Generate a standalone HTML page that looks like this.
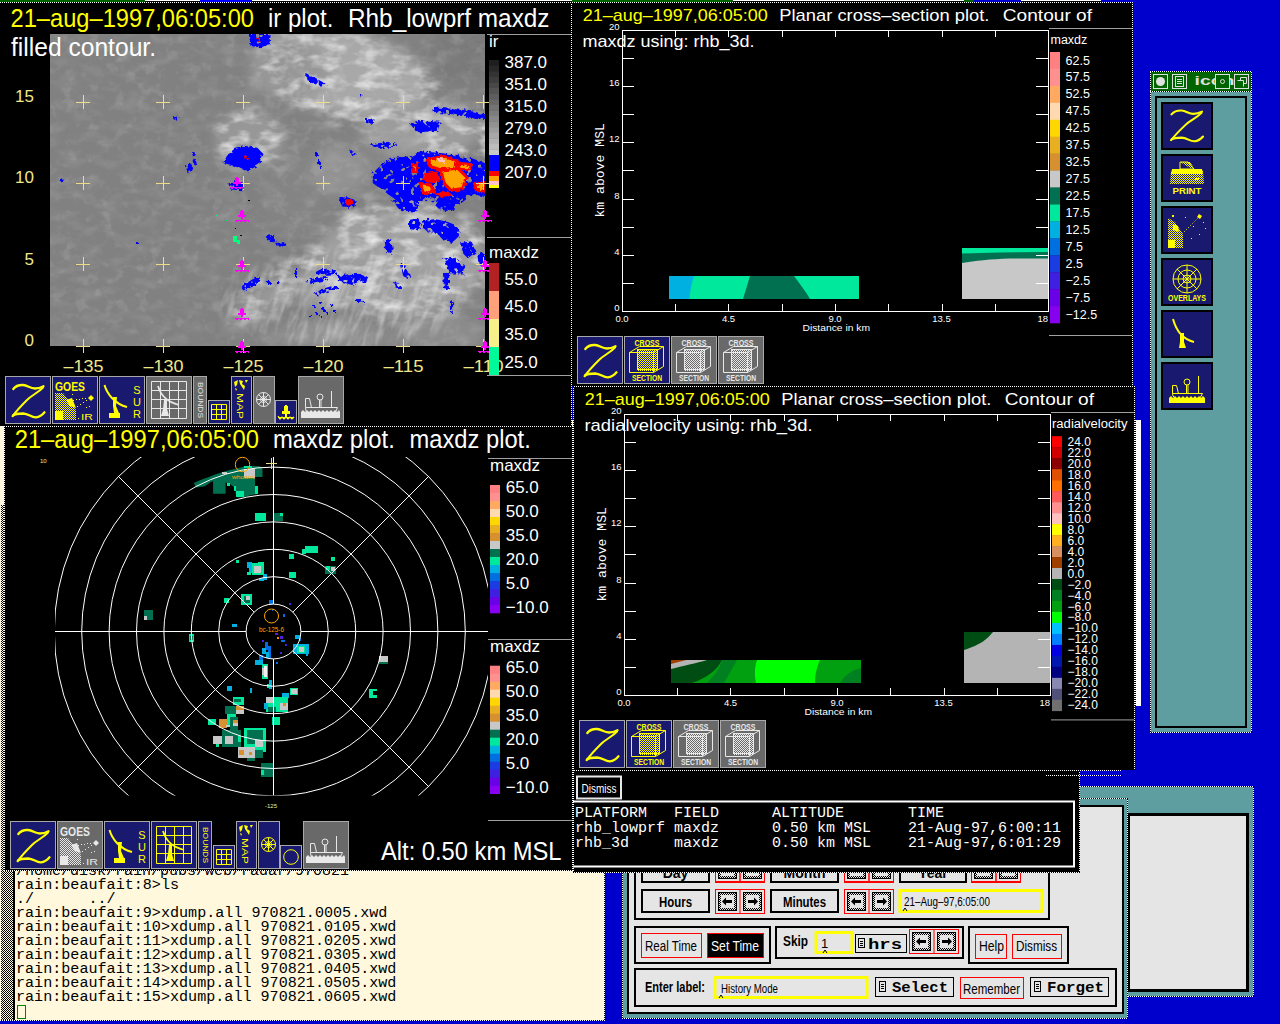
<!DOCTYPE html>
<html><head><meta charset="utf-8">
<style>
html,body{margin:0;padding:0;width:1280px;height:1024px;overflow:hidden;background:#0000cd;}
svg{position:absolute;left:0;top:0;}
text{font-family:"Liberation Sans",sans-serif;}
.m,.m text{font-family:"Liberation Mono",monospace;}
.sf,.sf text{font-family:"Liberation Serif",serif;}
</style></head><body>
<svg width="1280" height="1024" viewBox="0 0 1280 1024">
<defs>
<pattern id="chkY" width="2" height="2" patternUnits="userSpaceOnUse"><rect width="2" height="2" fill="#191970"/><rect width="1" height="1" fill="#ffff00"/><rect x="1" y="1" width="1" height="1" fill="#ffff00"/></pattern>
<pattern id="chkW" width="2" height="2" patternUnits="userSpaceOnUse"><rect width="2" height="2" fill="#696969"/><rect width="1" height="1" fill="#e8e8e8"/><rect x="1" y="1" width="1" height="1" fill="#e8e8e8"/></pattern>
<pattern id="chkT" width="2" height="2" patternUnits="userSpaceOnUse"><rect width="2" height="2" fill="#fff8dc"/><rect width="1" height="1" fill="#000"/><rect x="1" y="1" width="1" height="1" fill="#000"/></pattern>
<pattern id="dotH" width="2" height="2" patternUnits="userSpaceOnUse"><rect width="2" height="2" fill="#000"/><rect width="1" height="2" fill="#fff"/></pattern>
<pattern id="dotV" width="2" height="2" patternUnits="userSpaceOnUse"><rect width="2" height="2" fill="#000"/><rect width="2" height="1" fill="#fff"/></pattern>
<pattern id="chkG" width="2" height="2" patternUnits="userSpaceOnUse"><rect width="2" height="2" fill="#e5e5e5"/><rect width="1" height="1" fill="#000"/><rect x="1" y="1" width="1" height="1" fill="#000"/></pattern>

<!-- Z icon 46x48 -->
<symbol id="iZ" viewBox="0 0 46 48" width="46" height="48" overflow="visible">
<rect x="0.5" y="0.5" width="45" height="47" fill="#191970" stroke="#a8a8a8"/>
<g fill="none" stroke="#ffff00" stroke-linecap="round" stroke-linejoin="round">
<path d="M8.3,13 C11,9.5 14,8.8 18,9 C23,9.5 25,12.5 30,12.5 C34,12.5 36,11.5 38.5,10.2" stroke-width="2.3"/>
<path d="M38,11.5 C33,17 27,19 22,24 C16,30 12,34 7.5,40.3" stroke-width="2"/>
<path d="M8,39.5 C10,37.8 13,37.5 18,37.5 C24,37.8 26,41.5 31,41.3 C35,41 37.5,38.8 39.5,36.3" stroke-width="2.3"/>
</g>
</symbol>

<!-- cross section icon navy -->
<symbol id="iCSy" viewBox="0 0 46 48" width="46" height="48" overflow="visible">
<rect x="0.5" y="0.5" width="45" height="47" fill="#191970" stroke="#a8a8a8"/>
<text x="23" y="9.5" font-size="8.5" font-weight="bold" fill="#ffff00" text-anchor="middle" textLength="25" lengthAdjust="spacingAndGlyphs">CROSS</text>
<text x="23" y="45" font-size="8.5" font-weight="bold" fill="#ffff00" text-anchor="middle" textLength="30" lengthAdjust="spacingAndGlyphs">SECTION</text>
<rect x="13" y="13" width="20" height="22" fill="url(#chkY)"/>
<g fill="none" stroke="#ffff00" stroke-width="1">
<path d="M5.5,16.5 H29.5 V36.5 H5.5 Z M5.5,16.5 L15.5,10.5 H39.5 L29.5,16.5 M39.5,10.5 V30.5 L29.5,36.5"/>
<path d="M13.5,13.5 H33.5 V33.5 H13.5 Z"/>
</g>
</symbol>
<symbol id="iCSw" viewBox="0 0 46 48" width="46" height="48" overflow="visible">
<rect x="0.5" y="0.5" width="45" height="47" fill="#696969" stroke="#a8a8a8"/>
<text x="23" y="9.5" font-size="8.5" font-weight="bold" fill="#e8e8e8" text-anchor="middle" textLength="25" lengthAdjust="spacingAndGlyphs">CROSS</text>
<text x="23" y="45" font-size="8.5" font-weight="bold" fill="#e8e8e8" text-anchor="middle" textLength="30" lengthAdjust="spacingAndGlyphs">SECTION</text>
<rect x="13" y="13" width="20" height="22" fill="url(#chkW)"/>
<g fill="none" stroke="#e8e8e8" stroke-width="1">
<path d="M5.5,16.5 H29.5 V36.5 H5.5 Z M5.5,16.5 L15.5,10.5 H39.5 L29.5,16.5 M39.5,10.5 V30.5 L29.5,36.5"/>
<path d="M13.5,13.5 H33.5 V33.5 H13.5 Z"/>
</g>
</symbol>

<!-- GOES IR 46x48 -->
<symbol id="iGOES" viewBox="0 0 46 48" width="46" height="48" overflow="visible">
<rect x="0.5" y="0.5" width="45" height="47" fill="#191970" stroke="#a8a8a8"/>
<text x="3" y="14.5" font-size="12" font-weight="bold" fill="#ffff00" textLength="30" lengthAdjust="spacingAndGlyphs">GOES</text>
<path d="M3,17 L11,17 L24,34 L24,44 L3,44 Z" fill="url(#chkY)"/>
<path d="M3,35 L11,35 L11,44 L3,44 Z M14,24 L20,22 L24,32 L18,30 Z" fill="#ffff00"/>
<g fill="#ffff00"><path d="M39,19 L42,22 L39,25 L36,22 Z"/>
<rect x="21" y="24" width="1" height="1"/><rect x="24" y="23" width="1" height="1"/><rect x="27" y="23" width="1" height="1"/><rect x="30" y="22" width="1" height="1"/><rect x="33" y="22" width="1" height="1"/>
<rect x="25" y="30" width="1" height="1"/><rect x="28" y="28" width="1" height="1"/><rect x="31" y="26" width="1" height="1"/><rect x="34" y="24" width="1" height="1"/>
<rect x="20" y="18" width="1" height="1"/><rect x="34" y="31" width="1" height="1"/><rect x="37" y="30" width="1" height="1"/><rect x="26" y="42" width="1" height="1"/>
</g>
<text x="29" y="44" font-size="9" fill="#ffff00" textLength="12" lengthAdjust="spacingAndGlyphs">IR</text>
</symbol>

<!-- SUR radar 46x48 -->
<symbol id="iSUR" viewBox="0 0 46 48" width="46" height="48" overflow="visible">
<rect x="0.5" y="0.5" width="45" height="47" fill="#191970" stroke="#a8a8a8"/>
<path d="M5.5,9 C8,18 16,28 28,31" fill="none" stroke="#ffff00" stroke-width="2"/>
<path d="M14,21 L18,21 L17,30 L20,37 L15,37 L14,30 Z M10,37 L21,37 L21,42 L10,42 Z" fill="#ffff00"/>
<text x="38" y="17.5" font-size="11" fill="#ffff00" text-anchor="middle">S</text>
<text x="38" y="29.5" font-size="11" fill="#ffff00" text-anchor="middle">U</text>
<text x="38" y="41.5" font-size="11" fill="#ffff00" text-anchor="middle">R</text>
</symbol>

<!-- grid radar gray 46x48 -->
<symbol id="iGRIDw" viewBox="0 0 46 48" width="46" height="48" overflow="visible">
<rect x="0.5" y="0.5" width="45" height="47" fill="#696969" stroke="#a8a8a8"/>
<g fill="none" stroke="#e8e8e8" stroke-width="1">
<path d="M5.5,5.5 H40.5 V42.5 H5.5 Z M14.5,5.5 V42.5 M23.5,5.5 V42.5 M32.5,5.5 V42.5 M5.5,14.5 H40.5 M5.5,23.5 H40.5 M5.5,32.5 H40.5"/>
<path d="M12,10 C14,17 18,25 33,29" stroke-width="1.8"/>
</g>
<path d="M18,24 L21,24 L21,33 L23,40 L15,40 L17,33 Z" fill="#e8e8e8"/>
</symbol>
<symbol id="iGRIDy" viewBox="0 0 46 48" width="46" height="48" overflow="visible">
<rect x="0.5" y="0.5" width="45" height="47" fill="#191970" stroke="#a8a8a8"/>
<g fill="none" stroke="#ffff00" stroke-width="1">
<path d="M5.5,5.5 H40.5 V42.5 H5.5 Z M14.5,5.5 V42.5 M23.5,5.5 V42.5 M32.5,5.5 V42.5 M5.5,14.5 H40.5 M5.5,23.5 H40.5 M5.5,32.5 H40.5"/>
<path d="M12,10 C14,17 18,25 33,29" stroke-width="1.8"/>
</g>
<path d="M18,24 L21,24 L21,33 L23,40 L15,40 L17,33 Z" fill="#ffff00"/>
</symbol>
<!-- bounds 14x48 -->
<symbol id="iBOUNDS" viewBox="0 0 14 48" width="14" height="48" overflow="visible">
<rect x="0.5" y="0.5" width="13" height="47" fill="#696969" stroke="#a8a8a8"/>
<text transform="translate(4.5,6) rotate(90)" font-size="7" fill="#e8e8e8" textLength="36" lengthAdjust="spacingAndGlyphs">BOUNDS</text>
</symbol>
<symbol id="iBOUNDSy" viewBox="0 0 14 48" width="14" height="48" overflow="visible">
<rect x="0.5" y="0.5" width="13" height="47" fill="#191970" stroke="#a8a8a8"/>
<text transform="translate(4.5,6) rotate(90)" font-size="7" fill="#ffff00" textLength="36" lengthAdjust="spacingAndGlyphs">BOUNDS</text>
</symbol>
<!-- small grid 22x24 -->
<symbol id="iSGRID" viewBox="0 0 22 24" width="22" height="24" overflow="visible">
<rect x="0.5" y="0.5" width="21" height="23" fill="#191970" stroke="#a8a8a8"/>
<path d="M3.5,4.5 H18.5 V19.5 H3.5 Z M8.5,4.5 V19.5 M13.5,4.5 V19.5 M3.5,9.5 H18.5 M3.5,14.5 H18.5" fill="none" stroke="#ffff00"/>
</symbol>
<!-- map 21x48 -->
<symbol id="iMAP" viewBox="0 0 21 48" width="21" height="48" overflow="visible">
<rect x="0.5" y="0.5" width="20" height="47" fill="#191970" stroke="#a8a8a8"/>
<path d="M3,6 L7,4 L6,9 L4,11 Z M8,4 L12,5 L11,8 L14,10 L13,14 L11,11 L9,8 Z M14,4 L17,4 L15,7 Z M4,12 L6,13 L5,15 Z" fill="#ffff00"/>
<text transform="translate(6,17) rotate(90)" font-size="9" fill="#ffff00" textLength="26" lengthAdjust="spacingAndGlyphs">MAP</text>
</symbol>
<!-- globe gray 22x48 -->
<symbol id="iGLOBE" viewBox="0 0 22 48" width="22" height="48" overflow="visible">
<rect x="0.5" y="0.5" width="21" height="47" fill="#696969" stroke="#a8a8a8"/>
<g fill="none" stroke="#e8e8e8" stroke-width="1">
<circle cx="10.5" cy="23.5" r="7"/><circle cx="10.5" cy="23.5" r="3"/>
<path d="M10.5,16.5 V30.5 M3.5,23.5 H17.5 M5.5,18.5 L15.5,28.5 M15.5,18.5 L5.5,28.5"/>
</g>
</symbol>
<!-- buoy 22x24 -->
<symbol id="iBUOY" viewBox="0 0 22 24" width="22" height="24" overflow="visible">
<rect x="0.5" y="0.5" width="21" height="23" fill="#191970" stroke="#a8a8a8"/>
<path d="M10,5 H12 V6 H13 V11 H15 V14 H12 V17 H10 V14 H7 V11 H9 V6 H10 Z" fill="#ffff00"/>
<path d="M3,16 L5,19 L7,17 L9,19 L11,17 L13,19 L15,17 L17,19 L19,17" fill="none" stroke="#ffff00" stroke-width="1.2"/>
<rect x="3" y="17" width="16" height="1" fill="#ffff00"/>
</symbol>
<!-- ship gray 46x48 -->
<symbol id="iSHIP" viewBox="0 0 46 48" width="46" height="48" overflow="visible">
<rect x="0.5" y="0.5" width="45" height="47" fill="#696969" stroke="#a8a8a8"/>
<g fill="none" stroke="#e8e8e8" stroke-width="1">
<path d="M7.5,31.5 H39.5 L37,37 M7.5,31.5 L8,35 L10,37"/>
<path d="M7.5,31.5 V22.5 H11.5 L13.5,31.5"/>
<circle cx="22" cy="21" r="3"/>
<path d="M21.5,24 V31.5 M23,24 V31.5 M33.5,15 V31.5"/>
</g>
<path d="M3,36 L5,34 L7,36 L9,34 L11,36 L13,34 L15,36 L17,34 L19,36 L21,34 L23,36 L25,34 L27,36 L29,34 L31,36 L33,34 L35,36 L37,34 L39,36 L41,34 L42,36 L42,42 L3,42 Z" fill="#e8e8e8"/>
</symbol>
<symbol id="iSHIPy" viewBox="0 0 46 48" width="46" height="48" overflow="visible">
<rect x="0.5" y="0.5" width="45" height="47" fill="#191970" stroke="#a8a8a8"/>
<g fill="none" stroke="#ffff00" stroke-width="1">
<path d="M7.5,31.5 H39.5 L37,37 M7.5,31.5 L8,35 L10,37"/>
<path d="M7.5,31.5 V22.5 H11.5 L13.5,31.5"/>
<circle cx="22" cy="21" r="3"/>
<path d="M21.5,24 V31.5 M23,24 V31.5 M33.5,15 V31.5"/>
</g>
<path d="M3,36 L5,34 L7,36 L9,34 L11,36 L13,34 L15,36 L17,34 L19,36 L21,34 L23,36 L25,34 L27,36 L29,34 L31,36 L33,34 L35,36 L37,34 L39,36 L41,34 L42,36 L42,42 L3,42 Z" fill="#ffff00"/>
</symbol>
<!-- magenta buoy marker 16x14 centered -->
<symbol id="mBUOY" viewBox="-8 -10 16 14" width="16" height="14" overflow="visible">
<path d="M-1,-9 H1 V-8 H2 V-4 H4 V-2 H1 V0 H-1 V-2 H-4 V-4 H-2 V-8 H-1 Z" fill="#ff00ff"/>
<path d="M-7,1 L-5,3 L-3,1 L-1,3 L1,1 L3,3 L5,1 L7,3" fill="none" stroke="#ff00ff" stroke-width="1"/>
<rect x="-7" y="1" width="14" height="1" fill="#ff00ff"/>
</symbol>

<symbol id="iGOESw" viewBox="0 0 46 48" width="46" height="48" overflow="visible">
<rect x="0.5" y="0.5" width="45" height="47" fill="#696969" stroke="#a8a8a8"/>
<text x="3" y="14.5" font-size="12" font-weight="bold" fill="#e8e8e8" textLength="30" lengthAdjust="spacingAndGlyphs">GOES</text>
<path d="M3,17 L11,17 L24,34 L24,44 L3,44 Z" fill="url(#chkW)"/>
<path d="M3,35 L11,35 L11,44 L3,44 Z M14,24 L20,22 L24,32 L18,30 Z" fill="#e8e8e8"/>
<g fill="#e8e8e8"><path d="M39,19 L42,22 L39,25 L36,22 Z"/>
<rect x="21" y="24" width="1" height="1"/><rect x="24" y="23" width="1" height="1"/><rect x="27" y="23" width="1" height="1"/><rect x="30" y="22" width="1" height="1"/><rect x="33" y="22" width="1" height="1"/>
<rect x="25" y="30" width="1" height="1"/><rect x="28" y="28" width="1" height="1"/><rect x="31" y="26" width="1" height="1"/><rect x="34" y="24" width="1" height="1"/>
<rect x="20" y="18" width="1" height="1"/><rect x="34" y="31" width="1" height="1"/><rect x="37" y="30" width="1" height="1"/><rect x="26" y="42" width="1" height="1"/>
</g>
<text x="29" y="44" font-size="9" fill="#e8e8e8" textLength="12" lengthAdjust="spacingAndGlyphs">IR</text>
</symbol>
<symbol id="iGLOBEy" viewBox="0 0 22 48" width="22" height="48" overflow="visible">
<rect x="0.5" y="0.5" width="21" height="47" fill="#191970" stroke="#a8a8a8"/>
<g fill="none" stroke="#ffff00" stroke-width="1">
<circle cx="10.5" cy="23.5" r="7"/><circle cx="10.5" cy="23.5" r="3"/>
<path d="M10.5,16.5 V30.5 M3.5,23.5 H17.5 M5.5,18.5 L15.5,28.5 M15.5,18.5 L5.5,28.5"/>
</g>
</symbol>
<symbol id="iCIRC" viewBox="0 0 22 24" width="22" height="24" overflow="visible">
<rect x="0.5" y="0.5" width="21" height="23" fill="#191970" stroke="#a8a8a8"/>
<circle cx="11" cy="12" r="7.3" fill="none" stroke="#ffff00"/>
</symbol>
</defs>

<g id="topstrip">
<rect x="0" y="0" width="145" height="2" fill="#006400"/>
<rect x="145" y="0" width="55" height="2" fill="url(#dotV)"/>
<rect x="200" y="0" width="52" height="2" fill="#0000ff"/>
<rect x="252" y="0" width="320" height="2" fill="url(#dotV)"/>
<rect x="572" y="0" width="161" height="2" fill="#006400"/>
<rect x="733" y="0" width="231" height="2" fill="url(#dotV)"/>
<rect x="964" y="0" width="10" height="2" fill="#006400"/>
<rect x="1021" y="0" width="80" height="2" fill="url(#dotV)"/>
</g>

<g id="term">
<rect x="0" y="420" width="605" height="601" fill="#fff8dc"/>
<rect x="1" y="505" width="12" height="516" fill="url(#chkT)"/>
<rect x="13" y="866" width="2" height="155" fill="#000"/>
<rect x="604" y="866" width="1" height="155" fill="url(#dotV)"/>
<rect x="0" y="1020" width="605" height="1" fill="url(#dotH)"/>
<rect x="4" y="420" width="1" height="450" fill="url(#dotV)"/>
<g class="m" font-size="15.1" fill="#000">
<text x="16" y="874.7" textLength="333" lengthAdjust="spacingAndGlyphs">/home/disk/rain/pubs/web/radar/970821</text>
<text x="16" y="888.7" xml:space="preserve">rain:beaufait:8&gt;ls</text>
<text x="16" y="902.7" xml:space="preserve">./      ../</text>
<text x="16" y="916.7" xml:space="preserve">rain:beaufait:9&gt;xdump.all 970821.0005.xwd</text>
<text x="16" y="930.7" xml:space="preserve">rain:beaufait:10&gt;xdump.all 970821.0105.xwd</text>
<text x="16" y="944.7" xml:space="preserve">rain:beaufait:11&gt;xdump.all 970821.0205.xwd</text>
<text x="16" y="958.7" xml:space="preserve">rain:beaufait:12&gt;xdump.all 970821.0305.xwd</text>
<text x="16" y="972.7" xml:space="preserve">rain:beaufait:13&gt;xdump.all 970821.0405.xwd</text>
<text x="16" y="986.7" xml:space="preserve">rain:beaufait:14&gt;xdump.all 970821.0505.xwd</text>
<text x="16" y="1000.7" xml:space="preserve">rain:beaufait:15&gt;xdump.all 970821.0605.xwd</text>
</g>
<rect x="17.5" y="1005.5" width="8" height="13" fill="none" stroke="#008000" stroke-width="1"/>
</g>

<g id="backwin">
<rect x="1080" y="786" width="174" height="211" fill="#5f9ea0"/>
<rect x="1253" y="786" width="1" height="211" fill="url(#dotV)"/>
<rect x="1080" y="786" width="174" height="1" fill="url(#dotH)"/>
<rect x="1080" y="996" width="174" height="1" fill="url(#dotH)"/>
<rect x="1128" y="813" width="121" height="179" fill="#000"/>
<rect x="1130" y="816" width="116" height="173" fill="#e5e5e5"/>
</g>

<g id="timectl" font-family="Liberation Sans, sans-serif">
<rect x="622" y="798" width="506" height="221" fill="#5f9ea0"/>
<rect x="622" y="798" width="1" height="221" fill="url(#dotV)"/>
<rect x="1127" y="798" width="1" height="221" fill="url(#dotV)"/>
<rect x="622" y="1018" width="506" height="1" fill="url(#dotH)"/>
<rect x="622" y="798" width="506" height="1" fill="url(#dotH)"/>
<rect x="627" y="805" width="497" height="209" fill="#000"/>
<rect x="629" y="807" width="493" height="205" fill="#e5e5e5"/>
<!-- group 1 frame -->
<rect x="635" y="813" width="414" height="106" fill="none" stroke="#000" stroke-width="2"/>
<!-- day row (mostly hidden) -->
<rect x="642" y="858" width="67" height="24" fill="#e5e5e5" stroke="#000" stroke-width="2"/>
<text x="675.5" y="878" font-size="14" font-weight="bold" text-anchor="middle">Day</text>
<rect x="715.5" y="857.5" width="49" height="25" fill="none" stroke="#ff0000"/>
<rect x="739.5" y="857.5" width="1" height="25" fill="#ff0000"/>
<rect x="771" y="858" width="67" height="24" fill="#e5e5e5" stroke="#000" stroke-width="2"/>
<text x="804.5" y="878" font-size="14" font-weight="bold" text-anchor="middle">Month</text>
<rect x="844.5" y="857.5" width="49" height="25" fill="none" stroke="#ff0000"/>
<rect x="868.5" y="857.5" width="1" height="25" fill="#ff0000"/>
<rect x="900" y="858" width="66" height="24" fill="#e5e5e5" stroke="#000" stroke-width="2"/>
<text x="933" y="878" font-size="14" font-weight="bold" text-anchor="middle">Year</text>
<rect x="971.5" y="857.5" width="49" height="25" fill="none" stroke="#ff0000"/>
<rect x="995.5" y="857.5" width="1" height="25" fill="#ff0000"/>
<!-- hours row -->
<rect x="642" y="890" width="67" height="22" fill="#e5e5e5" stroke="#000" stroke-width="2"/>
<text x="675.5" y="907" font-size="14" font-weight="bold" text-anchor="middle" textLength="33" lengthAdjust="spacingAndGlyphs">Hours</text>
<rect x="771" y="890" width="67" height="22" fill="#e5e5e5" stroke="#000" stroke-width="2"/>
<text x="804.5" y="907" font-size="14" font-weight="bold" text-anchor="middle" textLength="43" lengthAdjust="spacingAndGlyphs">Minutes</text>
<g id="arrows1">
<rect x="715.5" y="889.5" width="49" height="24" fill="none" stroke="#ff0000"/>
<rect x="739.5" y="889.5" width="1" height="24" fill="#ff0000"/>
<rect x="718" y="892" width="19" height="19" fill="url(#chkG)"/>
<rect x="721" y="895" width="13" height="13" fill="#e5e5e5"/>
<rect x="718.5" y="892.5" width="18" height="18" fill="none" stroke="#000"/>
<path d="M722,901.5 L726,897.5 V900 H732 V903 H726 V905.5 Z" fill="#000"/>
<rect x="743" y="892" width="19" height="19" fill="url(#chkG)"/>
<rect x="746" y="895" width="13" height="13" fill="#e5e5e5"/>
<rect x="743.5" y="892.5" width="18" height="18" fill="none" stroke="#000"/>
<path d="M758,901.5 L754,897.5 V900 H748 V903 H754 V905.5 Z" fill="#000"/>
</g>
<use href="#arrows1" x="129" y="0"/>
<use href="#arrows1" x="0" y="-32"/><use href="#arrows1" x="129" y="-32"/><use href="#arrows1" x="256" y="-32"/>
<rect x="900" y="890.5" width="142" height="21" fill="none" stroke="#ffff00" stroke-width="3"/>
<text x="904" y="906" font-size="12" textLength="86" lengthAdjust="spacingAndGlyphs">21–Aug–97,6:05:00</text>
<path d="M903,911 L905,908 L907,911" fill="none" stroke="#000"/>
<!-- group real time -->
<rect x="635" y="927" width="135" height="36" fill="none" stroke="#000" stroke-width="2"/>
<rect x="641.5" y="933.5" width="60" height="24" fill="none" stroke="#ff0000"/>
<text x="645" y="951" font-size="14" textLength="52" lengthAdjust="spacingAndGlyphs">Real Time</text>
<rect x="707" y="933" width="57" height="25" fill="#000"/>
<rect x="707.5" y="933.5" width="56" height="24" fill="none" stroke="#ff0000"/>
<text x="711" y="951" font-size="14" fill="#fff" textLength="48" lengthAdjust="spacingAndGlyphs">Set Time</text>
<!-- group skip -->
<rect x="776" y="927" width="187" height="31" fill="none" stroke="#000" stroke-width="2"/>
<text x="783" y="946" font-size="14" font-weight="bold" textLength="25" lengthAdjust="spacingAndGlyphs">Skip</text>
<rect x="816" y="932.5" width="36" height="20" fill="none" stroke="#ffff00" stroke-width="3"/>
<text x="821" y="948" font-size="13">1</text>
<path d="M823,953 L825,950 L827,953" fill="none" stroke="#000"/>
<rect x="855.5" y="934.5" width="51" height="18" fill="none" stroke="#000"/>
<rect x="858.5" y="938.5" width="6" height="9" fill="#e5e5e5" stroke="#000"/>
<path d="M860,941.5 H863 M860,943.5 H863 M860,945.5 H863" stroke="#000"/>
<text x="868" y="948.5" font-size="14" font-weight="bold" class="m" textLength="34" lengthAdjust="spacingAndGlyphs">hrs</text>
<use href="#arrows1" x="194" y="40"/>
<!-- help/dismiss -->
<rect x="969" y="927" width="99" height="36" fill="none" stroke="#000" stroke-width="2"/>
<rect x="975.5" y="934.5" width="31" height="24" fill="none" stroke="#ff0000"/>
<text x="979" y="951" font-size="14" textLength="25" lengthAdjust="spacingAndGlyphs">Help</text>
<rect x="1012.5" y="934.5" width="49" height="24" fill="none" stroke="#ff0000"/>
<text x="1016" y="951" font-size="14" textLength="41" lengthAdjust="spacingAndGlyphs">Dismiss</text>
<!-- enter label -->
<rect x="635" y="969" width="481" height="37" fill="none" stroke="#000" stroke-width="2"/>
<text x="645" y="992" font-size="14" font-weight="bold" textLength="60" lengthAdjust="spacingAndGlyphs">Enter label:</text>
<rect x="715" y="977.5" width="152" height="20" fill="none" stroke="#ffff00" stroke-width="3"/>
<text x="721" y="993" font-size="12" textLength="57" lengthAdjust="spacingAndGlyphs">History Mode</text>
<path d="M719,998 L721,995 L723,998" fill="none" stroke="#000"/>
<rect x="875.5" y="977.5" width="78" height="19" fill="none" stroke="#000"/>
<rect x="879.5" y="981.5" width="6" height="10" fill="#e5e5e5" stroke="#000"/>
<path d="M881,984.5 H884 M881,986.5 H884 M881,988.5 H884" stroke="#000"/>
<text x="892" y="992" font-size="14" font-weight="bold" class="m" textLength="56" lengthAdjust="spacingAndGlyphs">Select</text>
<rect x="960.5" y="977.5" width="63" height="21" fill="none" stroke="#ff0000"/>
<text x="963" y="994" font-size="14" textLength="57" lengthAdjust="spacingAndGlyphs">Remember</text>
<rect x="1030.5" y="977.5" width="78" height="19" fill="none" stroke="#000"/>
<rect x="1034.5" y="981.5" width="6" height="10" fill="#e5e5e5" stroke="#000"/>
<path d="M1036,984.5 H1039 M1036,986.5 H1039 M1036,988.5 H1039" stroke="#000"/>
<text x="1047" y="992" font-size="14" font-weight="bold" class="m" textLength="57" lengthAdjust="spacingAndGlyphs">Forget</text>
</g>

<g id="iconbar">
<rect x="1150" y="71" width="101" height="662" fill="#5f9ea0"/>
<rect x="1150" y="71" width="1" height="662" fill="url(#dotV)"/>
<rect x="1251" y="71" width="1" height="662" fill="url(#dotV)"/>
<rect x="1150" y="71" width="102" height="1" fill="url(#dotH)"/>
<rect x="1150" y="732" width="102" height="1" fill="url(#dotH)"/>
<rect x="1151" y="72" width="100" height="19" fill="#006400"/>
<rect x="1150" y="91" width="102" height="1" fill="url(#dotH)"/>
<g fill="none" stroke="#e0e0e0" stroke-width="1">
<rect x="1153.5" y="74.5" width="14" height="14"/>
<rect x="1172.5" y="74.5" width="14" height="14"/>
<rect x="1215.5" y="74.5" width="14" height="14"/>
<rect x="1234.5" y="74.5" width="14" height="14"/>
</g>
<circle cx="1160.5" cy="81.5" r="4.5" fill="#e0e0e0"/>
<rect x="1175.5" y="76.5" width="8" height="10" fill="none" stroke="#e0e0e0"/>
<path d="M1177,79.5 H1182 M1177,81.5 H1182 M1177,83.5 H1182" stroke="#e0e0e0"/>
<text x="1194.5" y="85" font-size="13" font-weight="bold" fill="#e0e0e0" textLength="40" lengthAdjust="spacingAndGlyphs">icon</text>
<rect x="1215.5" y="74.5" width="14" height="14" fill="#006400" stroke="#e0e0e0"/>
<circle cx="1222.5" cy="81.5" r="2" fill="none" stroke="#e0e0e0"/>
<path d="M1237.5,80.5 H1243.5 V86.5 M1240.5,80.5 V77.5 H1246.5 V83.5 H1243.5" fill="none" stroke="#e0e0e0"/>
<rect x="1155" y="96" width="92" height="632" fill="#000"/>
<rect x="1157" y="98" width="88" height="628" fill="#5f9ea0"/>
<g>
<rect x="1161" y="102" width="52" height="48" fill="#000"/>
<rect x="1161" y="154" width="52" height="48" fill="#000"/>
<rect x="1161" y="206" width="52" height="48" fill="#000"/>
<rect x="1161" y="258" width="52" height="48" fill="#000"/>
<rect x="1161" y="310" width="52" height="48" fill="#000"/>
<rect x="1161" y="362" width="52" height="48" fill="#000"/>
</g>
<g fill="#191970">
<rect x="1163" y="104" width="48" height="44"/>
<rect x="1163" y="156" width="48" height="44"/>
<rect x="1163" y="208" width="48" height="44"/>
<rect x="1163" y="260" width="48" height="44"/>
<rect x="1163" y="312" width="48" height="44"/>
<rect x="1163" y="364" width="48" height="44"/>
</g>
<!-- Z -->
<g fill="none" stroke="#ffff00" stroke-linecap="round" transform="translate(1160.5,102) scale(1.0,0.95)">
<path d="M11,13 C14,9.5 17,8.8 21,9 C26,9.5 28,12.5 33,12.5 C37,12.5 39,11.5 41.5,10.2" stroke-width="2.2"/>
<path d="M41,11.5 C36,17 30,19 25,24 C19,30 15,34 10.5,40.3" stroke-width="2"/>
<path d="M11,39.5 C13,37.8 16,37.5 21,37.5 C27,37.8 29,41.5 34,41.3 C38,41 40.5,38.8 42.5,36.3" stroke-width="2.2"/>
</g>
<!-- PRINT -->
<g transform="translate(1163,156)">
<path d="M17,6 H27 L31,12 L27,12 Z" fill="url(#chkY)"/>
<path d="M17,6 H25 L31,13 H17 Z" fill="none" stroke="#ffff00"/>
<path d="M8,15 H40 L41,28 H7 Z" fill="url(#chkY)"/>
<path d="M9,13 H39 L40,18 H8 Z" fill="#ffff00"/>
<rect x="32" y="22" width="4" height="2" fill="#ffff00"/>
<text x="24" y="38" font-size="9" font-weight="bold" fill="#ffff00" text-anchor="middle" textLength="29" lengthAdjust="spacingAndGlyphs">PRINT</text>
</g>
<!-- satellite -->
<g transform="translate(1163,208)">
<path d="M5,10 L12,14 L20,26 L20,40 L5,40 Z" fill="url(#chkY)"/>
<path d="M5,32 L12,32 L12,40 L5,40 Z M10,16 L15,18 L16,24 L10,22 Z" fill="#ffff00"/>
<path d="M21,24 L37,8" stroke="#ffff00" stroke-dasharray="1,2" fill="none"/>
<path d="M36,6 L39,8 L37,11 L34,9 Z" fill="#ffff00"/>
<g fill="#ffff00"><rect x="9" y="7" width="2" height="2"/><rect x="22" y="9" width="1" height="1"/><rect x="30" y="18" width="1" height="1"/><rect x="40" y="14" width="1" height="1"/><rect x="36" y="26" width="1" height="1"/><rect x="28" y="30" width="1" height="1"/><rect x="42" y="20" width="1" height="1"/></g>
</g>
<!-- overlays -->
<g transform="translate(1163,260)" fill="none" stroke="#ffff00">
<circle cx="24" cy="19" r="14"/><circle cx="24" cy="19" r="9"/><circle cx="24" cy="19" r="4"/>
<path d="M24,5 V33 M10,19 H38 M14,9 L34,29 M34,9 L14,29"/>
<text x="24" y="41" font-size="8.5" font-weight="bold" fill="#ffff00" stroke="none" text-anchor="middle" textLength="38" lengthAdjust="spacingAndGlyphs">OVERLAYS</text>
</g>
<!-- radar -->
<g transform="translate(1163,312)">
<path d="M10,7 C13,18 19,27 31,30" fill="none" stroke="#ffff00" stroke-width="2"/>
<path d="M17,21 L21,21 L21,30 L23,36 L16,36 L17,30 Z" fill="#ffff00"/>
</g>
<!-- ship -->
<g transform="translate(1163,364)">
<g fill="none" stroke="#ffff00" stroke-width="1">
<path d="M9.5,29.5 H39.5 L37,34 M9.5,29.5 L10,32 L12,34"/>
<path d="M9.5,29.5 V21.5 H13.5 L15.5,29.5"/>
<circle cx="24" cy="18" r="3"/>
<path d="M23.5,21 V29.5 M25,21 V29.5 M35.5,12 V29.5"/>
</g>
<path d="M6,34 L8,32 L10,34 L12,32 L14,34 L16,32 L18,34 L20,32 L22,34 L24,32 L26,34 L28,32 L30,34 L32,32 L34,34 L36,32 L38,34 L40,32 L42,34 V39 H6 Z" fill="#ffff00"/>
</g>
<!-- white bar behind -->
</g>
<rect x="1135" y="420" width="6" height="286" fill="#fff"/>
<rect x="1135" y="420" width="1" height="286" fill="url(#dotV)"/>

<g id="win1">
<rect x="0" y="2" width="571" height="424" fill="#000"/>
<rect x="571" y="2" width="1" height="424" fill="url(#dotV)"/>
<rect x="0" y="2" width="571" height="1" fill="url(#dotH)"/>
<defs>
<clipPath id="irclip"><rect x="50" y="34" width="435" height="312"/></clipPath>
<filter id="blur6" x="-50%" y="-50%" width="200%" height="200%"><feGaussianBlur stdDeviation="6"/></filter>
<filter id="blur1" x="-50%" y="-50%" width="200%" height="200%"><feGaussianBlur stdDeviation="1.3"/></filter>
<filter id="blur3" x="-50%" y="-50%" width="200%" height="200%"><feGaussianBlur stdDeviation="3"/></filter>
<filter id="rough" x="-20%" y="-20%" width="140%" height="140%"><feTurbulence type="fractalNoise" baseFrequency="0.3" numOctaves="2" seed="3"/><feDisplacementMap in="SourceGraphic" scale="5"/></filter><filter id="roughh" x="-20%" y="-20%" width="140%" height="140%"><feTurbulence type="fractalNoise" baseFrequency="0.3" numOctaves="2" seed="3" result="n"/><feDisplacementMap in="SourceGraphic" in2="n" scale="6" result="d"/><feTurbulence type="fractalNoise" baseFrequency="0.18" numOctaves="2" seed="21" result="h"/><feColorMatrix in="h" type="matrix" values="0 0 0 0 0  0 0 0 0 0  0 0 0 0 0  -14 0 0 0 9.6" result="hm"/><feComposite in="d" in2="hm" operator="in"/></filter>
<filter id="tex" x="0" y="0" width="100%" height="100%"><feTurbulence type="fractalNoise" baseFrequency="0.08" numOctaves="3" seed="7"/><feColorMatrix type="matrix" values="0 0 0 0 1  0 0 0 0 1  0 0 0 0 1  5 0 0 0 -2.75"/></filter>
</defs>
<g clip-path="url(#irclip)">
<rect x="50" y="34" width="435" height="312" fill="#818181"/>
<!-- cloud masses -->
<defs>
<filter id="tex2" x="0" y="0" width="100%" height="100%"><feTurbulence type="fractalNoise" baseFrequency="0.05 0.09" numOctaves="3" seed="11"/><feColorMatrix type="matrix" values="0 0 0 0 0.85  0 0 0 0 0.85  0 0 0 0 0.85  2.2 0 0 0 -0.95"/></filter>
<mask id="cmask" maskUnits="userSpaceOnUse" x="50" y="34" width="435" height="312">
<rect x="50" y="34" width="435" height="312" fill="#222"/>
<g filter="url(#blur6)" fill="#fff">
<ellipse cx="350" cy="80" rx="95" ry="45" transform="rotate(15 350 80)"/>
<ellipse cx="400" cy="260" rx="90" ry="60"/>
<ellipse cx="270" cy="290" rx="50" ry="16" transform="rotate(-38 270 290)"/>
<ellipse cx="250" cy="140" rx="35" ry="30"/>
<ellipse cx="460" cy="140" rx="40" ry="30"/>
</g>
</mask>
</defs>
<g filter="url(#blur6)">
<ellipse cx="340" cy="72" rx="90" ry="42" fill="#a8a8a8" transform="rotate(12 340 72)"/>
<ellipse cx="290" cy="70" rx="40" ry="30" fill="#979797"/>
<ellipse cx="420" cy="130" rx="60" ry="28" fill="#9c9c9c"/>
<ellipse cx="470" cy="55" rx="42" ry="30" fill="#7a7a7a"/>
<ellipse cx="295" cy="195" rx="30" ry="38" fill="#848484"/>
<ellipse cx="250" cy="140" rx="35" ry="30" fill="#979797"/>
<ellipse cx="400" cy="262" rx="85" ry="55" fill="#9f9f9f"/>
<ellipse cx="340" cy="280" rx="45" ry="25" fill="#9d9d9d" transform="rotate(-20 340 280)"/>
<ellipse cx="265" cy="300" rx="45" ry="12" fill="#989898" transform="rotate(-38 265 300)"/>
<ellipse cx="340" cy="170" rx="30" ry="25" fill="#929292"/>
<ellipse cx="440" cy="332" rx="45" ry="16" fill="#8c8c8c"/>
<ellipse cx="330" cy="335" rx="60" ry="12" fill="#909090"/>
</g>
<rect x="50" y="34" width="435" height="312" filter="url(#tex)" opacity="0.09"/>
<defs>
<filter id="tex3" x="0" y="0" width="100%" height="100%"><feTurbulence type="fractalNoise" baseFrequency="0.03 0.13" numOctaves="3" seed="4"/><feColorMatrix type="matrix" values="0 0 0 0 0.82  0 0 0 0 0.82  0 0 0 0 0.82  2.6 0 0 0 -1.15"/></filter>
<mask id="smask" maskUnits="userSpaceOnUse" x="50" y="34" width="435" height="312">
<rect x="50" y="34" width="435" height="312" fill="#000"/>
<g filter="url(#blur6)" fill="#fff"><ellipse cx="350" cy="300" rx="110" ry="50"/><ellipse cx="260" cy="300" rx="40" ry="30"/></g>
</mask>
</defs>
<g mask="url(#smask)" opacity="0.45"><g transform="rotate(-70 345 300)"><rect x="150" y="100" width="400" height="400" filter="url(#tex3)"/></g></g>

<rect x="50" y="34" width="435" height="312" filter="url(#tex2)" mask="url(#cmask)" opacity="0.9"/>
<!-- blue convective blobs -->
<g fill="#0000ff" filter="url(#rough)"><path d="M226.7,156.3 L233.5,149.5 L245.4,146.1 L257.3,147.8 L262.4,152.9 L259.0,164.8 L247.1,171.6 L240.3,168.2 L230.1,164.8 L223.3,163.1 Z"/></g>
<g fill="#0000ff" filter="url(#roughh)">
<path d="M248.8,34.0 L270.9,34.0 L269.2,44.2 L260.7,47.6 L250.5,45.9 Z"/>
<path d="M228.4,183.5 L235.2,180.1 L243.7,183.5 L242.0,190.3 L230.1,189.6 Z"/>
<path d="M304.8,73.1 L311.6,76.5 L321.8,81.6 L326.9,85.0 L318.4,85.6 L308.2,81.6 Z"/>
<path d="M372.8,173.3 L383.0,163.1 L393.2,158.0 L410.2,156.3 L420.4,151.2 L440.8,152.9 L471.3,158.0 L484.9,163.1 L484.9,197.1 L471.3,193.7 L457.7,203.9 L440.8,202.2 L430.6,197.1 L415.3,203.9 L410.2,210.7 L403.4,210.7 L396.6,200.5 L383.0,190.3 L372.8,183.5 Z"/>
<path d="M338.8,198.8 L347.3,196.4 L355.8,200.5 L354.1,207.3 L342.2,206.6 Z"/>
<path d="M461.1,243.0 L471.3,241.3 L476.4,251.5 L467.9,258.3 L462.8,253.2 Z"/>
<path d="M444.2,260.0 L454.3,256.6 L464.5,265.1 L462.8,273.6 L449.3,273.6 Z"/>
<path d="M478.1,254.9 L484.9,251.5 L484.9,268.5 L479.8,265.1 Z"/>
<path d="M384.7,241.3 L391.5,239.6 L393.2,251.5 L386.4,253.2 Z"/>
<path d="M240.3,287.1 L253.9,278.6 L260.7,276.9 L255.6,285.4 L243.7,290.5 Z"/>
<path d="M265.8,236.2 L274.3,234.5 L276.0,241.3 L267.5,241.3 Z"/>
<path d="M276.0,243.0 L284.5,242.0 L286.2,246.4 L277.0,246.4 Z"/>
<path d="M410.2,124.0 L423.8,120.6 L440.8,121.7 L437.4,130.8 L417.0,132.5 Z"/>
<path d="M430.6,107.1 L451.0,108.8 L467.9,110.5 L484.9,113.9 L484.9,118.9 L467.9,117.2 L451.0,113.9 L434.0,112.8 Z"/>
<path d="M366.0,118.9 L374.5,119.6 L373.5,124.0 L366.0,123.0 Z"/>
<path d="M369.4,144.4 L386.4,142.1 L396.6,143.4 L393.2,147.8 L376.2,147.8 Z"/>
<path d="M185.9,166.5 L191.0,163.1 L192.7,169.9 L187.6,173.3 Z"/>
<path d="M192.0,151.2 L194.4,151.2 L196.8,164.8 L194.4,165.8 Z"/>
<path d="M400.0,197.1 L410.2,200.5 L415.3,210.7 L403.4,209.0 Z"/>
<path d="M60.2,179.4 L65.3,179.4 L64.3,182.1 L60.9,182.1 Z"/>
<path d="M174.0,117.2 L178.4,116.2 L177.8,120.6 L174.4,120.6 Z"/>
<path d="M349.0,149.5 L355.8,152.9 L352.4,156.3 Z"/>
<path d="M359.2,93.5 L362.6,95.2 L360.9,98.6 Z"/>
<path d="M409,220 L418,218 L421,224 L416,230 L409,229 Z"/>
<path d="M423,221 L435,219 L448,222 L458,226 L459,236 L452,243 L444,241 L437,233 L428,232 L423,228 Z"/>
<path d="M443,273 L449,273 L449,290 L444,289 Z"/>
<path d="M316,272 C320,268 332,268 337,271 L336,274 C328,275 320,275 316,274 Z"/>
<path d="M338,276 L350,274 L362,274 L368,277 L366,283 L358,282 L352,285 L345,283 L338,281 Z"/>
<path d="M314,294 L322,289 L332,286 L338,286 L336,290 L326,292 L318,296 Z"/>
<path d="M305,282 L315,278 L328,277 L326,280 L312,283 Z"/>
<path d="M401,265 L405,264 L407,272 L412,276 L409,279 L403,276 Z"/>
<path d="M393,282 L399,283 L403,289 L397,289 Z"/>
<path d="M431,201 L445,200 L457,203 L452,211 L440,210 Z"/>
<path d="M392,201 L405,200 L419,205 L416,212 L400,210 Z"/>
<rect x="312" y="305" width="3" height="2"/>
<rect x="318" y="302" width="4" height="2"/>
<rect x="322" y="308" width="3" height="3"/>
<rect x="326" y="312" width="2" height="2"/>
<rect x="330" y="304" width="3" height="2"/>
<rect x="315" y="312" width="2" height="2"/>
<rect x="334" y="310" width="2" height="3"/>
<rect x="320" y="316" width="2" height="2"/>
<rect x="309" y="315" width="3" height="2"/>
<rect x="356" y="299" width="5" height="3"/>
<rect x="361" y="301" width="3" height="3"/>
<rect x="295" y="267" width="2" height="11"/>
<rect x="267" y="281" width="3" height="3"/>
<rect x="277" y="282" width="3" height="2"/>
<rect x="451" y="298" width="2" height="15"/>
<rect x="312" y="144" width="2" height="4"/><rect x="136" y="242" width="4" height="3"/>
<rect x="315" y="152" width="2" height="5"/>
<rect x="318" y="160" width="2" height="5"/>
<rect x="320" y="166" width="2" height="4"/>
</g>
<g filter="url(#rough)">
<path d="M427.2,159.7 L444.2,156.3 L457.7,161.4 L454.3,168.2 L440.8,169.9 L430.6,166.5 Z" fill="#ffa500" stroke="#ff0000" stroke-width="3"/><path d="M440.8,169.9 L457.7,168.2 L466.2,176.7 L462.8,188.6 L451.0,190.3 L444.2,183.5 Z" fill="#ffa500" stroke="#ff0000" stroke-width="3"/><path d="M420.4,183.5 L430.6,185.2 L434.0,192.0 L423.8,193.7 Z" fill="#ffa500" stroke="#ff0000" stroke-width="3"/><path d="M412.9,164.8 L417.7,163.8 L417.0,171.6 L412.9,171.6 Z" fill="#ffa500" stroke="#ff0000" stroke-width="3"/><path d="M474.7,183.5 L484.9,181.8 L484.9,191.0 L476.4,190.3 Z" fill="#ffa500" stroke="#ff0000" stroke-width="3"/><path d="M457.7,163.1 L471.3,164.8 L469.6,169.9 L459.4,169.2 Z" fill="#ffa500" stroke="#ff0000" stroke-width="3"/><path d="M423.8,173.3 L437.4,171.6 L440.8,180.1 L430.6,183.5 L422.1,180.1 Z" fill="#ff0000"/><path d="M434.0,193.7 L447.6,191.0 L452.7,195.4 L440.8,197.1 Z" fill="#ff0000"/>
<ellipse cx="349" cy="202" rx="4" ry="3" fill="#ff0000"/>
<ellipse cx="246" cy="157" rx="2" ry="2" fill="#ff0000"/>
<ellipse cx="259" cy="40" rx="2" ry="2" fill="#ff0000"/>
<ellipse cx="441" cy="160" rx="3" ry="2" fill="#ffc0cb"/>
</g>
<!-- green dots -->
<g fill="#00ff7f"><rect x="233" y="236" width="4" height="6"/><rect x="237" y="240" width="3" height="4"/><rect x="216" y="215" width="1" height="1"/><rect x="226" y="220" width="1" height="1"/></g>
<g fill="#000"><rect x="240" y="235" width="2" height="1"/><rect x="248" y="200" width="2" height="1"/><rect x="235" y="228" width="1" height="1"/></g>
</g>
<!-- crosses -->
<g stroke="#eedd88" stroke-width="1" fill="none" shape-rendering="crispEdges">
<path d="M76,102.5 H90 M83.5,95 V109 M156,102.5 H170 M163.5,95 V109 M236,102.5 H250 M243.5,95 V109 M316,102.5 H330 M323.5,95 V109 M396,102.5 H410 M403.5,95 V109 M476,102.5 H490 M483.5,95 V109"/>
<path d="M76,183.5 H90 M83.5,176 V190 M156,183.5 H170 M163.5,176 V190 M236,183.5 H250 M243.5,176 V190 M316,183.5 H330 M323.5,176 V190 M396,183.5 H410 M403.5,176 V190 M476,183.5 H490 M483.5,176 V190"/>
<path d="M76,264.5 H90 M83.5,257 V271 M156,264.5 H170 M163.5,257 V271 M236,264.5 H250 M243.5,257 V271 M316,264.5 H330 M323.5,257 V271 M396,264.5 H410 M403.5,257 V271 M476,264.5 H490 M483.5,257 V271"/>
<path d="M76,346.5 H90 M83.5,339 V353 M156,346.5 H170 M163.5,339 V353 M236,346.5 H250 M243.5,339 V353 M316,346.5 H330 M323.5,339 V353 M396,346.5 H410 M403.5,339 V353 M476,346.5 H490 M483.5,339 V353"/>
</g>
<!-- magenta buoys -->
<use href="#mBUOY" x="229" y="176"/><use href="#mBUOY" x="234" y="209"/><use href="#mBUOY" x="234" y="259"/><use href="#mBUOY" x="234" y="307"/><use href="#mBUOY" x="234" y="340"/>
<use href="#mBUOY" x="477" y="209"/><use href="#mBUOY" x="477" y="259"/><use href="#mBUOY" x="477" y="307"/><use href="#mBUOY" x="477" y="340"/>
<!-- titles -->
<text x="10.5" y="26.5" font-size="25" fill="#ffff00" textLength="243.5" lengthAdjust="spacingAndGlyphs">21–aug–1997,06:05:00</text>
<text x="268" y="26.5" font-size="25" fill="#fff" textLength="65.4" lengthAdjust="spacingAndGlyphs">ir plot.</text><text x="348" y="26.5" font-size="25" fill="#fff" textLength="201.5" lengthAdjust="spacingAndGlyphs">Rhb_lowprf maxdz</text>
<text x="11" y="56" font-size="25" fill="#fff" textLength="145" lengthAdjust="spacingAndGlyphs">filled contour.</text>
<!-- axis labels -->
<g fill="#f0e68c" font-size="17">
<text x="34" y="101.5" text-anchor="end">15</text>
<text x="34" y="183" text-anchor="end">10</text>
<text x="34" y="264.5" text-anchor="end">5</text>
<text x="34" y="346" text-anchor="end">0</text>
<text x="83.5" y="372" text-anchor="middle" textLength="40" lengthAdjust="spacingAndGlyphs">–135</text>
<text x="163.5" y="372" text-anchor="middle" textLength="40" lengthAdjust="spacingAndGlyphs">–130</text>
<text x="243.5" y="372" text-anchor="middle" textLength="40" lengthAdjust="spacingAndGlyphs">–125</text>
<text x="323.5" y="372" text-anchor="middle" textLength="40" lengthAdjust="spacingAndGlyphs">–120</text>
<text x="403.5" y="372" text-anchor="middle" textLength="40" lengthAdjust="spacingAndGlyphs">–115</text>
<text x="483.5" y="372" text-anchor="middle" textLength="40" lengthAdjust="spacingAndGlyphs">–110</text>
</g>
<!-- legend ir -->
<rect x="487" y="34" width="84" height="1" fill="#a0a0a0"/>
<text x="489" y="46.5" font-size="17" fill="#fff">ir</text>
<defs><linearGradient id="irg" x1="0" y1="0" x2="0" y2="1"><stop offset="0" stop-color="#1a1a1a"/><stop offset="1" stop-color="#c8c8c8"/></linearGradient></defs>
<rect x="489" y="60.00" width="10" height="5.99" fill="rgb(30,30,30)"/><rect x="489" y="65.59" width="10" height="5.99" fill="rgb(40,40,40)"/><rect x="489" y="71.18" width="10" height="5.99" fill="rgb(51,51,51)"/><rect x="489" y="76.76" width="10" height="5.99" fill="rgb(61,61,61)"/><rect x="489" y="82.35" width="10" height="5.99" fill="rgb(72,72,72)"/><rect x="489" y="87.94" width="10" height="5.99" fill="rgb(83,83,83)"/><rect x="489" y="93.53" width="10" height="5.99" fill="rgb(93,93,93)"/><rect x="489" y="99.12" width="10" height="5.99" fill="rgb(104,104,104)"/><rect x="489" y="104.71" width="10" height="5.99" fill="rgb(115,115,115)"/><rect x="489" y="110.29" width="10" height="5.99" fill="rgb(125,125,125)"/><rect x="489" y="115.88" width="10" height="5.99" fill="rgb(136,136,136)"/><rect x="489" y="121.47" width="10" height="5.99" fill="rgb(146,146,146)"/><rect x="489" y="127.06" width="10" height="5.99" fill="rgb(157,157,157)"/><rect x="489" y="132.65" width="10" height="5.99" fill="rgb(168,168,168)"/><rect x="489" y="138.24" width="10" height="5.99" fill="rgb(178,178,178)"/><rect x="489" y="143.82" width="10" height="5.99" fill="rgb(189,189,189)"/><rect x="489" y="149.41" width="10" height="5.99" fill="rgb(200,200,200)"/>
<rect x="489" y="155" width="10" height="16" fill="#0000ff"/>
<rect x="489" y="171" width="10" height="5" fill="#ff0000"/>
<rect x="489" y="176" width="10" height="5" fill="#ffa500"/>
<rect x="489" y="181" width="10" height="4" fill="#ffc0cb"/>
<rect x="489" y="185" width="10" height="3" fill="#ffff00"/>
<g fill="#fff" font-size="17">
<text x="504.5" y="67.5">387.0</text>
<text x="504.5" y="89.5">351.0</text>
<text x="504.5" y="111.6">315.0</text>
<text x="504.5" y="133.7">279.0</text>
<text x="504.5" y="155.8">243.0</text>
<text x="504.5" y="178">207.0</text>
</g>
<!-- legend maxdz -->
<rect x="487" y="237" width="84" height="1" fill="#a0a0a0"/>
<rect x="487" y="375" width="84" height="1" fill="#a0a0a0"/>
<text x="489" y="257.5" font-size="17" fill="#fff">maxdz</text>
<rect x="489" y="263" width="10" height="28" fill="#b22222"/>
<rect x="489" y="291" width="10" height="28" fill="#ffa07a"/>
<rect x="489" y="319" width="10" height="28" fill="#f5f08a"/>
<rect x="489" y="347" width="10" height="28" fill="#00fa9a"/>
<g fill="#fff" font-size="17">
<text x="504.5" y="284.5">55.0</text>
<text x="504.5" y="312.2">45.0</text>
<text x="504.5" y="340">35.0</text>
<text x="504.5" y="368">25.0</text>
</g>
<!-- icons -->
<use href="#iZ" x="5" y="376"/>
<use href="#iGOES" x="52" y="376"/>
<use href="#iSUR" x="99" y="376"/>
<use href="#iGRIDw" x="146" y="376"/>
<use href="#iBOUNDS" x="193" y="376"/>
<use href="#iSGRID" x="208" y="400"/>
<use href="#iMAP" x="231" y="376"/>
<use href="#iGLOBE" x="253" y="376"/>
<use href="#iBUOY" x="275" y="400"/>
<use href="#iSHIP" x="298" y="376"/>
</g>

<g id="csdz">
<rect x="571" y="2" width="562" height="384" fill="#000"/>
<rect x="571" y="2" width="1" height="384" fill="url(#dotV)"/>
<rect x="1132" y="2" width="1" height="384" fill="url(#dotV)"/>
<rect x="571" y="2" width="562" height="1" fill="url(#dotH)"/>
<rect x="669" y="276" width="190" height="23" fill="#00e89c"/>
<path d="M669,276 H694 C691,285 690,292 689.5,299 H669 Z" fill="#00b0e0"/>
<path d="M750,276 H794 C800,284 806,292 810,299 H743 Z" fill="#007050"/>
<rect x="962" y="248" width="86" height="51" fill="#c8c8c8"/>
<path d="M962,248 H1048 V258.5 L1010,258.5 C990,259 975,261 962,263 Z" fill="#007050"/>
<path d="M962,248 H1048 V252 L1000,252.5 L962,253.5 Z" fill="#00e89c"/>
<g fill="#fff">
<rect x="622" y="30" width="427" height="1"/>
<rect x="622" y="311" width="427" height="1"/>
<rect x="622" y="30" width="1" height="282"/>
<rect x="1048" y="30" width="1" height="282"/>
<rect x="622" y="58" width="12" height="1"/><rect x="1036" y="58" width="12" height="1"/>
<rect x="622" y="86" width="12" height="1"/><rect x="1036" y="86" width="12" height="1"/>
<rect x="622" y="114" width="12" height="1"/><rect x="1036" y="114" width="12" height="1"/>
<rect x="622" y="142" width="12" height="1"/><rect x="1036" y="142" width="12" height="1"/>
<rect x="622" y="170" width="12" height="1"/><rect x="1036" y="170" width="12" height="1"/>
<rect x="622" y="199" width="12" height="1"/><rect x="1036" y="199" width="12" height="1"/>
<rect x="622" y="227" width="12" height="1"/><rect x="1036" y="227" width="12" height="1"/>
<rect x="622" y="255" width="12" height="1"/><rect x="1036" y="255" width="12" height="1"/>
<rect x="622" y="283" width="12" height="1"/><rect x="1036" y="283" width="12" height="1"/>
<rect x="675" y="304" width="1" height="7"/><rect x="675" y="30" width="1" height="7"/>
<rect x="728" y="304" width="1" height="7"/><rect x="728" y="30" width="1" height="7"/>
<rect x="782" y="304" width="1" height="7"/><rect x="782" y="30" width="1" height="7"/>
<rect x="835" y="304" width="1" height="7"/><rect x="835" y="30" width="1" height="7"/>
<rect x="888" y="304" width="1" height="7"/><rect x="888" y="30" width="1" height="7"/>
<rect x="942" y="304" width="1" height="7"/><rect x="942" y="30" width="1" height="7"/>
<rect x="995" y="304" width="1" height="7"/><rect x="995" y="30" width="1" height="7"/>
</g>
<g fill="#fff" font-size="9.5">
<text x="619.5" y="30.0" text-anchor="end">20</text>
<text x="619.5" y="86.2" text-anchor="end">16</text>
<text x="619.5" y="142.4" text-anchor="end">12</text>
<text x="619.5" y="198.6" text-anchor="end">8</text>
<text x="619.5" y="254.8" text-anchor="end">4</text>
<text x="619.5" y="311.0" text-anchor="end">0</text>
<text x="622.0" y="322" text-anchor="middle">0.0</text>
<text x="728.5" y="322" text-anchor="middle">4.5</text>
<text x="835.0" y="322" text-anchor="middle">9.0</text>
<text x="941.5" y="322" text-anchor="middle">13.5</text>
<text x="1048" y="322" text-anchor="end">18</text>
<text x="802.5" y="331" textLength="67.5" lengthAdjust="spacingAndGlyphs">Distance in km</text>
</g>
<text class="m" transform="translate(603.5,217.5) rotate(-90)" font-size="13" fill="#fff" textLength="94.5" lengthAdjust="spacingAndGlyphs">km above MSL</text>
<text x="582.8" y="20.5" font-size="17" fill="#ffff00" textLength="185" lengthAdjust="spacingAndGlyphs">21–aug–1997,06:05:00</text>
<text x="779.3" y="20.5" font-size="17" fill="#fff" textLength="210.1" lengthAdjust="spacingAndGlyphs">Planar cross–section plot.</text>
<text x="1002.8" y="20.5" font-size="17" fill="#fff" textLength="89.2" lengthAdjust="spacingAndGlyphs">Contour of</text>
<text x="582.5" y="47" font-size="17" fill="#fff" textLength="172" lengthAdjust="spacingAndGlyphs">maxdz using: rhb_3d.</text>
<rect x="1049" y="28" width="83" height="1" fill="#a0a0a0"/>
<rect x="1049" y="335" width="83" height="1" fill="#a0a0a0"/>
<text x="1050.5" y="44" font-size="12.5" fill="#fff">maxdz</text>
<rect x="1050" y="52.00" width="10" height="17.24" fill="#ff8080"/>
<text x="1065.5" y="64.5" font-size="12.5" fill="#fff">62.5</text>
<rect x="1050" y="68.94" width="10" height="17.24" fill="#ff9090"/>
<text x="1065.5" y="81.4" font-size="12.5" fill="#fff">57.5</text>
<rect x="1050" y="85.88" width="10" height="17.24" fill="#ffaa60"/>
<text x="1065.5" y="98.4" font-size="12.5" fill="#fff">52.5</text>
<rect x="1050" y="102.81" width="10" height="17.24" fill="#ffdab0"/>
<text x="1065.5" y="115.3" font-size="12.5" fill="#fff">47.5</text>
<rect x="1050" y="119.75" width="10" height="17.24" fill="#ffd700"/>
<text x="1065.5" y="132.2" font-size="12.5" fill="#fff">42.5</text>
<rect x="1050" y="136.69" width="10" height="17.24" fill="#e8b020"/>
<text x="1065.5" y="149.2" font-size="12.5" fill="#fff">37.5</text>
<rect x="1050" y="153.62" width="10" height="17.24" fill="#d69030"/>
<text x="1065.5" y="166.1" font-size="12.5" fill="#fff">32.5</text>
<rect x="1050" y="170.56" width="10" height="17.24" fill="#c8c8c8"/>
<text x="1065.5" y="183.1" font-size="12.5" fill="#fff">27.5</text>
<rect x="1050" y="187.50" width="10" height="17.24" fill="#007050"/>
<text x="1065.5" y="200.0" font-size="12.5" fill="#fff">22.5</text>
<rect x="1050" y="204.44" width="10" height="17.24" fill="#00e89c"/>
<text x="1065.5" y="216.9" font-size="12.5" fill="#fff">17.5</text>
<rect x="1050" y="221.38" width="10" height="17.24" fill="#00b0e0"/>
<text x="1065.5" y="233.9" font-size="12.5" fill="#fff">12.5</text>
<rect x="1050" y="238.31" width="10" height="17.24" fill="#0070e0"/>
<text x="1065.5" y="250.8" font-size="12.5" fill="#fff">7.5</text>
<rect x="1050" y="255.25" width="10" height="17.24" fill="#1a3ce0"/>
<text x="1065.5" y="267.8" font-size="12.5" fill="#fff">2.5</text>
<rect x="1050" y="272.19" width="10" height="17.24" fill="#4020e0"/>
<text x="1065.5" y="284.7" font-size="12.5" fill="#fff">−2.5</text>
<rect x="1050" y="289.12" width="10" height="17.24" fill="#6a00e8"/>
<text x="1065.5" y="301.6" font-size="12.5" fill="#fff">−7.5</text>
<rect x="1050" y="306.06" width="10" height="17.24" fill="#8800f0"/>
<text x="1065.5" y="318.6" font-size="12.5" fill="#fff">−12.5</text>
<use href="#iZ" x="577" y="336"/>
<use href="#iCSy" x="624" y="336"/>
<use href="#iCSw" x="671" y="336"/>
<use href="#iCSw" x="718" y="336"/>
</g>
<g id="csvr">
<rect x="573" y="386" width="562" height="384" fill="#000"/>
<rect x="573" y="386" width="1" height="384" fill="url(#dotV)"/>
<rect x="1134" y="386" width="1" height="384" fill="url(#dotV)"/>
<rect x="573" y="386" width="562" height="1" fill="url(#dotH)"/>
<rect x="671" y="660" width="190" height="23" fill="#00a010"/>
<path d="M757,660 H820 C816,669 815,676 815,683 H756 C754,674 755,666 757,660 Z" fill="#00ff00"/>
<path d="M671,660 H722 C718,669 707,678 692,683 H671 Z" fill="#004d13"/>
<path d="M671,660 H707 C697,663 682,666 671,669 Z" fill="#b4b4b4"/>
<path d="M671,660 H686 C682,661 675,663 671,664 Z" fill="#a04000"/>
<path d="M861,668 V683 H840 C845,675 852,670 861,668 Z" fill="#008020"/>
<path d="M722,660 H737 C732,669 728,676 724,683 H707 C714,676 720,668 722,660 Z" fill="#008020"/>
<rect x="964" y="632" width="86" height="51" fill="#b4b4b4"/>
<path d="M964,632 H993 C987,639 982,644 964,650 Z" fill="#004d13"/>
<g fill="#fff">
<rect x="624" y="414" width="427" height="1"/>
<rect x="624" y="695" width="427" height="1"/>
<rect x="624" y="414" width="1" height="282"/>
<rect x="1050" y="414" width="1" height="282"/>
<rect x="624" y="442" width="12" height="1"/><rect x="1038" y="442" width="12" height="1"/>
<rect x="624" y="470" width="12" height="1"/><rect x="1038" y="470" width="12" height="1"/>
<rect x="624" y="498" width="12" height="1"/><rect x="1038" y="498" width="12" height="1"/>
<rect x="624" y="526" width="12" height="1"/><rect x="1038" y="526" width="12" height="1"/>
<rect x="624" y="554" width="12" height="1"/><rect x="1038" y="554" width="12" height="1"/>
<rect x="624" y="583" width="12" height="1"/><rect x="1038" y="583" width="12" height="1"/>
<rect x="624" y="611" width="12" height="1"/><rect x="1038" y="611" width="12" height="1"/>
<rect x="624" y="639" width="12" height="1"/><rect x="1038" y="639" width="12" height="1"/>
<rect x="624" y="667" width="12" height="1"/><rect x="1038" y="667" width="12" height="1"/>
<rect x="677" y="688" width="1" height="7"/><rect x="677" y="414" width="1" height="7"/>
<rect x="730" y="688" width="1" height="7"/><rect x="730" y="414" width="1" height="7"/>
<rect x="784" y="688" width="1" height="7"/><rect x="784" y="414" width="1" height="7"/>
<rect x="837" y="688" width="1" height="7"/><rect x="837" y="414" width="1" height="7"/>
<rect x="890" y="688" width="1" height="7"/><rect x="890" y="414" width="1" height="7"/>
<rect x="944" y="688" width="1" height="7"/><rect x="944" y="414" width="1" height="7"/>
<rect x="997" y="688" width="1" height="7"/><rect x="997" y="414" width="1" height="7"/>
</g>
<g fill="#fff" font-size="9.5">
<text x="621.5" y="414.0" text-anchor="end">20</text>
<text x="621.5" y="470.2" text-anchor="end">16</text>
<text x="621.5" y="526.4" text-anchor="end">12</text>
<text x="621.5" y="582.6" text-anchor="end">8</text>
<text x="621.5" y="638.8" text-anchor="end">4</text>
<text x="621.5" y="695.0" text-anchor="end">0</text>
<text x="624.0" y="706" text-anchor="middle">0.0</text>
<text x="730.5" y="706" text-anchor="middle">4.5</text>
<text x="837.0" y="706" text-anchor="middle">9.0</text>
<text x="943.5" y="706" text-anchor="middle">13.5</text>
<text x="1050" y="706" text-anchor="end">18</text>
<text x="804.5" y="715" textLength="67.5" lengthAdjust="spacingAndGlyphs">Distance in km</text>
</g>
<text class="m" transform="translate(605.5,601.5) rotate(-90)" font-size="13" fill="#fff" textLength="94.5" lengthAdjust="spacingAndGlyphs">km above MSL</text>
<text x="584.8" y="404.5" font-size="17" fill="#ffff00" textLength="185" lengthAdjust="spacingAndGlyphs">21–aug–1997,06:05:00</text>
<text x="781.3" y="404.5" font-size="17" fill="#fff" textLength="210.1" lengthAdjust="spacingAndGlyphs">Planar cross–section plot.</text>
<text x="1004.8" y="404.5" font-size="17" fill="#fff" textLength="89.2" lengthAdjust="spacingAndGlyphs">Contour of</text>
<text x="584.5" y="431" font-size="17" fill="#fff" textLength="228" lengthAdjust="spacingAndGlyphs">radialvelocity using: rhb_3d.</text>
<rect x="1051" y="412" width="83" height="1" fill="#a0a0a0"/>
<rect x="1051" y="719.4" width="83" height="1" fill="#a0a0a0"/>
<text x="1052" y="428" font-size="12.5" fill="#fff" textLength="75.5" lengthAdjust="spacingAndGlyphs">radialvelocity</text>
<rect x="1052" y="436.20" width="10" height="11.28" fill="#ff0000"/>
<text x="1067.5" y="445.7" font-size="12" fill="#fff">24.0</text>
<rect x="1052" y="447.18" width="10" height="11.28" fill="#d00000"/>
<text x="1067.5" y="456.7" font-size="12" fill="#fff">22.0</text>
<rect x="1052" y="458.17" width="10" height="11.28" fill="#8b0000"/>
<text x="1067.5" y="467.7" font-size="12" fill="#fff">20.0</text>
<rect x="1052" y="469.15" width="10" height="11.28" fill="#e05000"/>
<text x="1067.5" y="478.7" font-size="12" fill="#fff">18.0</text>
<rect x="1052" y="480.14" width="10" height="11.28" fill="#ff7000"/>
<text x="1067.5" y="489.6" font-size="12" fill="#fff">16.0</text>
<rect x="1052" y="491.12" width="10" height="11.28" fill="#ff5a5a"/>
<text x="1067.5" y="500.6" font-size="12" fill="#fff">14.0</text>
<rect x="1052" y="502.10" width="10" height="11.28" fill="#ff9090"/>
<text x="1067.5" y="511.6" font-size="12" fill="#fff">12.0</text>
<rect x="1052" y="513.09" width="10" height="11.28" fill="#ffc0c0"/>
<text x="1067.5" y="522.6" font-size="12" fill="#fff">10.0</text>
<rect x="1052" y="524.07" width="10" height="11.28" fill="#ffff00"/>
<text x="1067.5" y="533.6" font-size="12" fill="#fff">8.0</text>
<rect x="1052" y="535.06" width="10" height="11.28" fill="#ffb020"/>
<text x="1067.5" y="544.6" font-size="12" fill="#fff">6.0</text>
<rect x="1052" y="546.04" width="10" height="11.28" fill="#d89060"/>
<text x="1067.5" y="555.5" font-size="12" fill="#fff">4.0</text>
<rect x="1052" y="557.02" width="10" height="11.28" fill="#a04000"/>
<text x="1067.5" y="566.5" font-size="12" fill="#fff">2.0</text>
<rect x="1052" y="568.01" width="10" height="11.28" fill="#b4b4b4"/>
<text x="1067.5" y="577.5" font-size="12" fill="#fff">0.0</text>
<rect x="1052" y="578.99" width="10" height="11.28" fill="#004d13"/>
<text x="1067.5" y="588.5" font-size="12" fill="#fff">−2.0</text>
<rect x="1052" y="589.98" width="10" height="11.28" fill="#008020"/>
<text x="1067.5" y="599.5" font-size="12" fill="#fff">−4.0</text>
<rect x="1052" y="600.96" width="10" height="11.28" fill="#00a010"/>
<text x="1067.5" y="610.5" font-size="12" fill="#fff">−6.0</text>
<rect x="1052" y="611.94" width="10" height="11.28" fill="#00ff00"/>
<text x="1067.5" y="621.4" font-size="12" fill="#fff">−8.0</text>
<rect x="1052" y="622.93" width="10" height="11.28" fill="#00c0ff"/>
<text x="1067.5" y="632.4" font-size="12" fill="#fff">−10.0</text>
<rect x="1052" y="633.91" width="10" height="11.28" fill="#0080ff"/>
<text x="1067.5" y="643.4" font-size="12" fill="#fff">−12.0</text>
<rect x="1052" y="644.90" width="10" height="11.28" fill="#0000e0"/>
<text x="1067.5" y="654.4" font-size="12" fill="#fff">−14.0</text>
<rect x="1052" y="655.88" width="10" height="11.28" fill="#0018b0"/>
<text x="1067.5" y="665.4" font-size="12" fill="#fff">−16.0</text>
<rect x="1052" y="666.86" width="10" height="11.28" fill="#000080"/>
<text x="1067.5" y="676.4" font-size="12" fill="#fff">−18.0</text>
<rect x="1052" y="677.85" width="10" height="11.28" fill="#8888b0"/>
<text x="1067.5" y="687.3" font-size="12" fill="#fff">−20.0</text>
<rect x="1052" y="688.83" width="10" height="11.28" fill="#505078"/>
<text x="1067.5" y="698.3" font-size="12" fill="#fff">−22.0</text>
<rect x="1052" y="699.82" width="10" height="11.28" fill="#707070"/>
<text x="1067.5" y="709.3" font-size="12" fill="#fff">−24.0</text>
<use href="#iZ" x="579" y="720"/>
<use href="#iCSy" x="626" y="720"/>
<use href="#iCSw" x="673" y="720"/>
<use href="#iCSw" x="720" y="720"/>
</g>
<g id="radar">
<rect x="4" y="426" width="569" height="445" fill="#000"/>
<rect x="4" y="426" width="1" height="445" fill="url(#dotV)"/>
<rect x="572" y="426" width="1" height="445" fill="url(#dotV)"/>
<rect x="4" y="426" width="569" height="1" fill="url(#dotH)"/>
<rect x="4" y="870" width="569" height="1" fill="url(#dotH)"/>
<defs><clipPath id="radclip"><rect x="55" y="457" width="433" height="338.5"/></clipPath></defs>
<g clip-path="url(#radclip)">
<path d="M193.8,483.1 L200.6,480.0 L208.8,476.9 L213.8,475.0 L221.2,472.5 L230.0,470.0 L236.2,468.8 L245.0,466.2 L250.0,466.0 L260.0,466.2 L262.5,468.8 L262.5,476.9 L255.0,476.9 L255.0,486.2 L258.1,486.2 L258.1,493.8 L251.9,495.0 L243.8,496.9 L237.5,497.5 L235.6,493.8 L235.6,487.5 L232.5,486.2 L230.0,483.8 L225.6,482.5 L225.6,493.8 L213.1,493.8 L213.1,481.2 L210.0,482.5 L205.0,486.2 L196.2,487.5 Z" fill="#007050"/>
<rect x="244" y="469" width="11" height="9" fill="#c8c8c8"/>
<rect x="227" y="483" width="3" height="3" fill="#00e89c"/>
<rect x="234" y="486" width="2" height="5" fill="#00e89c"/>
<rect x="236" y="491" width="8" height="6" fill="#00e89c"/>
<rect x="255" y="486" width="3" height="8" fill="#00e89c"/>
<rect x="222" y="472" width="5" height="2" fill="#c8c8c8"/>
<rect x="244" y="466" width="8" height="2" fill="#00e89c"/>
<rect x="255" y="513" width="11" height="8" fill="#00e89c"/>
<rect x="274" y="513" width="9" height="8" fill="#007050"/>
<rect x="280" y="513" width="3" height="3" fill="#00e89c"/>
<rect x="305" y="546" width="13" height="7" fill="#00e89c"/>
<rect x="302" y="549" width="4" height="5" fill="#00e89c"/>
<rect x="289" y="554" width="5" height="5" fill="#00e89c"/>
<rect x="331" y="557" width="4" height="4" fill="#00e89c"/>
<rect x="236" y="560" width="3" height="3" fill="#00e89c"/>
<rect x="325" y="566" width="11" height="8" fill="#007050"/>
<rect x="326" y="566" width="4" height="4" fill="#00e89c"/>
<rect x="331" y="567" width="4" height="4" fill="#c8c8c8"/>
<rect x="289" y="572" width="7" height="6" fill="#00e89c"/>
<rect x="247" y="562" width="5" height="6" fill="#00b0e0"/>
<rect x="249" y="568" width="4" height="5" fill="#00b0e0"/>
<rect x="252" y="563" width="12" height="12" fill="#00e89c"/>
<rect x="254" y="566" width="7" height="7" fill="#c8c8c8"/>
<rect x="258" y="562" width="6" height="4" fill="#00e89c"/>
<rect x="263" y="574" width="4" height="6" fill="#00b0e0"/>
<rect x="259" y="578" width="5" height="3" fill="#00b0e0"/>
<rect x="247" y="572" width="4" height="3" fill="#00e89c"/>
<rect x="241" y="594" width="11" height="11" fill="#00e89c"/>
<rect x="244" y="596" width="6" height="7" fill="#007050"/>
<rect x="246" y="596" width="4" height="4" fill="#c8c8c8"/>
<rect x="224" y="598" width="5" height="5" fill="#00e89c"/>
<rect x="232" y="624" width="5" height="3" fill="#00b0e0"/>
<rect x="269" y="600" width="4" height="4" fill="#0070e0"/>
<rect x="283" y="614" width="2" height="3" fill="#0070e0"/>
<rect x="272" y="609" width="1" height="2" fill="#0070e0"/>
<rect x="289" y="603" width="2" height="2" fill="#5020e0"/>
<rect x="144" y="610" width="9" height="10" fill="#007050"/>
<rect x="144" y="616" width="3" height="4" fill="#c8c8c8"/>
<rect x="189" y="634" width="5" height="8" fill="#00e89c"/>
<rect x="190" y="636" width="3" height="4" fill="#007050"/>
<rect x="275" y="633" width="3" height="2" fill="#5020e0"/>
<rect x="280" y="636" width="3" height="3" fill="#5020e0"/>
<rect x="277" y="637" width="2" height="2" fill="#ff8800"/>
<rect x="281" y="640" width="4" height="2" fill="#0070e0"/>
<rect x="285" y="644" width="2" height="2" fill="#5020e0"/>
<rect x="262" y="640" width="2" height="2" fill="#5020e0"/>
<rect x="280" y="652" width="2" height="2" fill="#5020e0"/>
<rect x="276" y="662" width="2" height="2" fill="#0070e0"/>
<rect x="265" y="642" width="3" height="8" fill="#0070e0"/>
<rect x="268" y="646" width="3" height="12" fill="#0070e0"/>
<rect x="262" y="648" width="4" height="6" fill="#00b0e0"/>
<rect x="266" y="652" width="3" height="6" fill="#00b0e0"/>
<rect x="259" y="655" width="4" height="5" fill="#0070e0"/>
<rect x="255" y="660" width="8" height="5" fill="#00b0e0"/>
<rect x="262" y="664" width="6" height="15" fill="#00e89c"/>
<rect x="264" y="666" width="3" height="11" fill="#f0f0f0"/>
<rect x="262" y="668" width="2" height="7" fill="#c8c8c8"/>
<rect x="269" y="680" width="3" height="9" fill="#00b0e0"/>
<rect x="267" y="684" width="2" height="4" fill="#00e89c"/>
<rect x="293" y="644" width="16" height="10" fill="#00b0e0"/>
<rect x="297" y="646" width="8" height="7" fill="#00e89c"/>
<rect x="299" y="647" width="5" height="5" fill="#c8c8c8"/>
<rect x="295" y="635" width="5" height="4" fill="#00b0e0"/>
<rect x="299" y="638" width="2" height="3" fill="#0070e0"/>
<rect x="306" y="653" width="2" height="3" fill="#00b0e0"/>
<rect x="379" y="656" width="9" height="7" fill="#c8c8c8"/>
<rect x="379" y="662" width="9" height="2" fill="#007050"/>
<rect x="369" y="689" width="8" height="9" fill="#00e89c"/>
<rect x="373" y="691" width="4" height="4" fill="#000"/>
<rect x="227" y="686" width="5" height="5" fill="#00b0e0"/>
<rect x="250" y="688" width="2" height="5" fill="#00b0e0"/>
<rect x="282" y="693" width="7" height="5" fill="#00b0e0"/>
<rect x="290" y="688" width="8" height="7" fill="#00e89c"/>
<rect x="291" y="689" width="6" height="5" fill="#c8c8c8"/>
<rect x="233" y="697" width="11" height="8" fill="#00e89c"/>
<rect x="225" y="706" width="11" height="8" fill="#007050"/>
<rect x="236" y="706" width="8" height="5" fill="#d69030"/>
<rect x="236" y="710" width="8" height="4" fill="#c8c8c8"/>
<rect x="234" y="699" width="7" height="3" fill="#007050"/>
<rect x="266" y="697" width="22" height="15" fill="#00e89c"/>
<rect x="266" y="697" width="7" height="6" fill="#c8c8c8"/>
<rect x="268" y="707" width="8" height="5" fill="#007050"/>
<rect x="280" y="703" width="8" height="7" fill="#c8c8c8"/>
<rect x="283" y="703" width="3" height="3" fill="#d69030"/>
<rect x="264" y="703" width="4" height="6" fill="#00b0e0"/>
<rect x="272" y="717" width="8" height="8" fill="#00e89c"/>
<rect x="208" y="719" width="8" height="6" fill="#00e89c"/>
<rect x="219" y="719" width="8" height="9" fill="#d69030"/>
<rect x="226" y="725" width="4" height="2" fill="#c8c8c8"/>
<rect x="227" y="714" width="9" height="11" fill="#00e89c"/>
<rect x="230" y="717" width="8" height="13" fill="#007050"/>
<rect x="233" y="720" width="5" height="3" fill="#d69030"/>
<rect x="233" y="723" width="5" height="3" fill="#c8c8c8"/>
<rect x="222" y="730" width="19" height="17" fill="#007050"/>
<rect x="213" y="736" width="9" height="8" fill="#c8c8c8"/>
<rect x="225" y="736" width="8" height="8" fill="#c8c8c8"/>
<rect x="216" y="744" width="3" height="3" fill="#00e89c"/>
<rect x="238" y="736" width="3" height="6" fill="#00e89c"/>
<rect x="244" y="728" width="22" height="22" fill="#00e89c"/>
<rect x="247" y="730" width="16" height="14" fill="#007050"/>
<rect x="255" y="740" width="8" height="7" fill="#c8c8c8"/>
<rect x="238" y="747" width="17" height="11" fill="#c8c8c8"/>
<rect x="239" y="750" width="5" height="5" fill="#d69030"/>
<rect x="249" y="752" width="3" height="3" fill="#d69030"/>
<rect x="255" y="750" width="8" height="8" fill="#007050"/>
<rect x="247" y="758" width="8" height="3" fill="#007050"/>
<rect x="263" y="744" width="3" height="8" fill="#00e89c"/>
<rect x="261" y="763" width="12" height="14" fill="#007050"/>
<rect x="261" y="770" width="3" height="5" fill="#00e89c"/>
<g fill="none" stroke="#fff" stroke-width="1">
<circle cx="273.5" cy="631.5" r="27.4"/>
<circle cx="273.5" cy="631.5" r="54.8"/>
<circle cx="273.5" cy="631.5" r="82.2"/>
<circle cx="273.5" cy="631.5" r="109.6"/>
<circle cx="273.5" cy="631.5" r="137.0"/>
<circle cx="273.5" cy="631.5" r="164.4"/>
<circle cx="273.5" cy="631.5" r="191.8"/>
<circle cx="273.5" cy="631.5" r="219.2"/>
<path d="M55,631.5 H246.1 M300.9,631.5 H488 M273.5,457 V604.1 M273.5,658.9 V795.5 M117.9,475.9 L254.1,612.1 M292.9,650.9 L429.1,787.1 M117.9,787.1 L254.1,650.9 M292.9,612.1 L429.1,475.9"/>
</g>
</g>
<g fill="none" stroke="#ffa500" stroke-width="1"><circle cx="242.5" cy="464.5" r="7.2"/><circle cx="271.5" cy="616" r="7"/></g>
<path d="M266,463.5 H277 M271.5,458 V469" stroke="#eedd88" stroke-width="1" fill="none"/>
<text x="232" y="479" font-size="6" fill="#ffa500" textLength="23" lengthAdjust="spacingAndGlyphs">whoami</text>
<text x="259" y="632" font-size="7.5" fill="#ffa500" textLength="25" lengthAdjust="spacingAndGlyphs">bc-125-6</text>
<text x="40" y="463" font-size="6" fill="#f0e68c">10</text>
<text x="265" y="808" font-size="6" fill="#f0e68c">-125</text>
<text x="14.7" y="448.3" font-size="25" fill="#ffff00" textLength="244.3" lengthAdjust="spacingAndGlyphs">21–aug–1997,06:05:00</text>
<text x="273" y="448.3" font-size="25" fill="#fff" textLength="121.8" lengthAdjust="spacingAndGlyphs">maxdz plot.</text>
<text x="409.6" y="448.3" font-size="25" fill="#fff" textLength="121.2" lengthAdjust="spacingAndGlyphs">maxdz plot.</text>
<rect x="488" y="458" width="84" height="1" fill="#a0a0a0"/>
<text x="490" y="470.8" font-size="17" fill="#fff">maxdz</text>
<rect x="490" y="485.0" width="10" height="8.3" fill="#ff8080"/>
<rect x="490" y="493.0" width="10" height="8.3" fill="#ff9090"/>
<rect x="490" y="501.0" width="10" height="8.3" fill="#ffaa60"/>
<rect x="490" y="509.0" width="10" height="8.3" fill="#ffdab0"/>
<rect x="490" y="517.0" width="10" height="8.3" fill="#ffd700"/>
<rect x="490" y="525.0" width="10" height="8.3" fill="#e8b020"/>
<rect x="490" y="533.0" width="10" height="8.3" fill="#d69030"/>
<rect x="490" y="541.0" width="10" height="8.3" fill="#c8c8c8"/>
<rect x="490" y="549.0" width="10" height="8.3" fill="#007050"/>
<rect x="490" y="557.0" width="10" height="8.3" fill="#00e89c"/>
<rect x="490" y="565.0" width="10" height="8.3" fill="#00b0e0"/>
<rect x="490" y="573.0" width="10" height="8.3" fill="#0070e0"/>
<rect x="490" y="581.0" width="10" height="8.3" fill="#1a3ce0"/>
<rect x="490" y="589.0" width="10" height="8.3" fill="#4020e0"/>
<rect x="490" y="597.0" width="10" height="8.3" fill="#6a00e8"/>
<rect x="490" y="605.0" width="10" height="8.3" fill="#8800f0"/>
<text x="505.7" y="492.5" font-size="17" fill="#fff">65.0</text>
<text x="505.7" y="516.5" font-size="17" fill="#fff">50.0</text>
<text x="505.7" y="540.5" font-size="17" fill="#fff">35.0</text>
<text x="505.7" y="564.5" font-size="17" fill="#fff">20.0</text>
<text x="505.7" y="588.5" font-size="17" fill="#fff">5.0</text>
<text x="505.7" y="612.5" font-size="17" fill="#fff">−10.0</text>
<rect x="488" y="639" width="84" height="1" fill="#a0a0a0"/>
<text x="490" y="651.6" font-size="17" fill="#fff">maxdz</text>
<rect x="490" y="665.7" width="10" height="8.3" fill="#ff8080"/>
<rect x="490" y="673.7" width="10" height="8.3" fill="#ff9090"/>
<rect x="490" y="681.7" width="10" height="8.3" fill="#ffaa60"/>
<rect x="490" y="689.7" width="10" height="8.3" fill="#ffdab0"/>
<rect x="490" y="697.7" width="10" height="8.3" fill="#ffd700"/>
<rect x="490" y="705.7" width="10" height="8.3" fill="#e8b020"/>
<rect x="490" y="713.7" width="10" height="8.3" fill="#d69030"/>
<rect x="490" y="721.7" width="10" height="8.3" fill="#c8c8c8"/>
<rect x="490" y="729.7" width="10" height="8.3" fill="#007050"/>
<rect x="490" y="737.7" width="10" height="8.3" fill="#00e89c"/>
<rect x="490" y="745.7" width="10" height="8.3" fill="#00b0e0"/>
<rect x="490" y="753.7" width="10" height="8.3" fill="#0070e0"/>
<rect x="490" y="761.7" width="10" height="8.3" fill="#1a3ce0"/>
<rect x="490" y="769.7" width="10" height="8.3" fill="#4020e0"/>
<rect x="490" y="777.7" width="10" height="8.3" fill="#6a00e8"/>
<rect x="490" y="785.7" width="10" height="8.3" fill="#8800f0"/>
<text x="505.7" y="673.2" font-size="17" fill="#fff">65.0</text>
<text x="505.7" y="697.2" font-size="17" fill="#fff">50.0</text>
<text x="505.7" y="721.2" font-size="17" fill="#fff">35.0</text>
<text x="505.7" y="745.2" font-size="17" fill="#fff">20.0</text>
<text x="505.7" y="769.2" font-size="17" fill="#fff">5.0</text>
<text x="505.7" y="793.2" font-size="17" fill="#fff">−10.0</text>
<rect x="488" y="820" width="84" height="1" fill="#a0a0a0"/>
<text x="381" y="860.3" font-size="25" fill="#fff" textLength="180.5" lengthAdjust="spacingAndGlyphs">Alt: 0.50 km MSL</text>
<use href="#iZ" x="10" y="821"/>
<use href="#iGOESw" x="57" y="821"/>
<use href="#iSUR" x="104" y="821"/>
<use href="#iGRIDy" x="151" y="821"/>
<use href="#iBOUNDSy" x="198" y="821"/>
<use href="#iSGRID" x="213" y="845"/>
<use href="#iMAP" x="236" y="821"/>
<use href="#iGLOBEy" x="258" y="821"/>
<use href="#iCIRC" x="280" y="845"/>
<use href="#iSHIP" x="303" y="821"/>
</g>
<g id="popup">
<rect x="573" y="770" width="507" height="103" fill="#000"/>
<rect x="573" y="770" width="507" height="1" fill="url(#dotH)"/>
<rect x="573" y="770" width="1" height="103" fill="url(#dotV)"/>
<rect x="1079" y="770" width="1" height="103" fill="url(#dotV)"/>
<rect x="573" y="872" width="507" height="1" fill="url(#dotH)"/>
<rect x="1045" y="770" width="77" height="1" fill="url(#dotH)"/>
<rect x="1045" y="775" width="77" height="1" fill="url(#dotH)"/>
<rect x="577" y="776.5" width="44" height="22" fill="none" stroke="#e8e8e8" stroke-width="2"/>
<text x="581.5" y="792.5" font-size="13" fill="#fff" textLength="35" lengthAdjust="spacingAndGlyphs">Dismiss</text>
<path d="M573,801.5 H1074 V866.5 H573" fill="none" stroke="#fff" stroke-width="2"/>
<g class="m" font-size="14.5" fill="#fff">
<text x="575" y="817" textLength="72.0" lengthAdjust="spacingAndGlyphs">PLATFORM</text>
<text x="674" y="817" textLength="45.0" lengthAdjust="spacingAndGlyphs">FIELD</text>
<text x="772" y="817" textLength="72.0" lengthAdjust="spacingAndGlyphs">ALTITUDE</text>
<text x="908" y="817" textLength="36.0" lengthAdjust="spacingAndGlyphs">TIME</text>
<text x="575" y="832" textLength="90.0" lengthAdjust="spacingAndGlyphs">rhb_lowprf</text>
<text x="674" y="832" textLength="45.0" lengthAdjust="spacingAndGlyphs">maxdz</text>
<text x="772" y="832" textLength="99.0" lengthAdjust="spacingAndGlyphs">0.50 km MSL</text>
<text x="908" y="832" textLength="153.0" lengthAdjust="spacingAndGlyphs">21-Aug-97,6:00:11</text>
<text x="575" y="847" textLength="54.0" lengthAdjust="spacingAndGlyphs">rhb_3d</text>
<text x="674" y="847" textLength="45.0" lengthAdjust="spacingAndGlyphs">maxdz</text>
<text x="772" y="847" textLength="99.0" lengthAdjust="spacingAndGlyphs">0.50 km MSL</text>
<text x="908" y="847" textLength="153.0" lengthAdjust="spacingAndGlyphs">21-Aug-97,6:01:29</text>
</g>
</g>

</svg>
</body></html>
